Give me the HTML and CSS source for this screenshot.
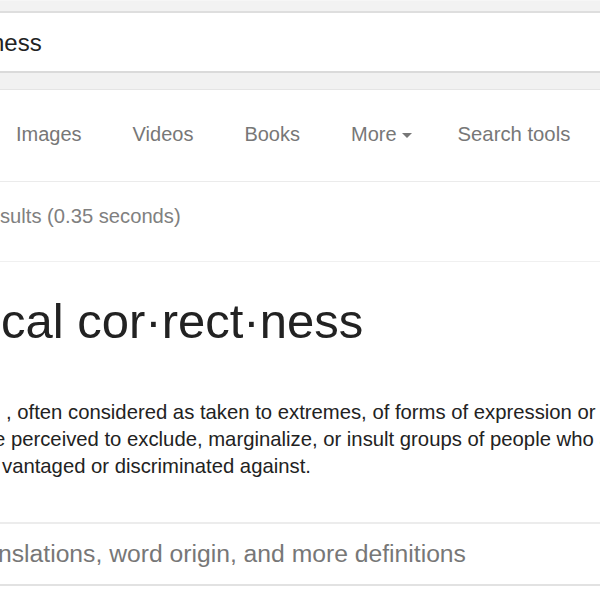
FILE: index.html
```html
<!DOCTYPE html>
<html>
<head>
<meta charset="utf-8">
<link rel="stylesheet" href="styles.css">
</head>
<body>
<div class="page">
  <div class="top-band"></div>
  <div class="search"><span class="query">ness</span></div>
  <div class="sub-band"></div>
  <nav class="tabs">
    <span class="tab t-images">Images</span>
    <span class="tab t-videos">Videos</span>
    <span class="tab t-books">Books</span>
    <span class="tab t-more">More<span class="caret"></span></span>
    <span class="tab t-tools">Search tools</span>
  </nav>
  <div class="stats">sults (0.35 seconds)</div>
  <div class="card">
    <h1 class="word">cal cor·rect·ness</h1>
    <div class="def">
      <div class="line l1">, often considered as taken to extremes, of forms of expression or action that</div>
      <div class="line l2">e perceived to exclude, marginalize, or insult groups of people who are socially</div>
      <div class="line l3">vantaged or discriminated against.</div>
    </div>
    <div class="more-defs"><span class="md-text">nslations, word origin, and more definitions</span></div>
  </div>
</div>
</body>
</html>
```

FILE: styles.css
```css
html, body {
  margin: 0;
  padding: 0;
  background: #ffffff;
}
body {
  width: 600px;
  height: 600px;
  overflow: hidden;
  font-family: "Liberation Sans", Arial, sans-serif;
}
.page {
  width: 600px;
  display: flex;
  flex-direction: column;
}
.top-band {
  height: 10px;
  background: #f2f2f2;
  border-top: 1px solid #f6f6f6;
  border-bottom: 2px solid #dedede;
}
.search {
  height: 58px;
  background: #ffffff;
  display: flex;
  align-items: center;
  overflow: hidden;
}
.query {
  font-size: 24px;
  color: #222222;
  margin-left: -9px;
  padding-top: 1px;
}
.sub-band {
  height: 16px;
  background: #f1f1f1;
  border-top: 2px solid #dadada;
  border-bottom: 1px solid #e4e4e4;
}
.tabs {
  height: 92px;
  display: flex;
  align-items: center;
  padding-bottom: 3px;
  box-sizing: border-box;
  border-bottom: 1px solid #ebebeb;
  font-size: 20px;
  color: #777777;
}
.tab {
  white-space: nowrap;
  display: flex;
  align-items: center;
}
.t-images { margin-left: 16px; }
.t-videos { margin-left: 51px; }
.t-books { margin-left: 51px; }
.t-more { margin-left: 51px; }
.t-tools { margin-left: 46px; font-size: 20.3px; }
.caret {
  display: inline-block;
  width: 0;
  height: 0;
  margin-left: 5px;
  margin-top: 2px;
  border-left: 5px solid transparent;
  border-right: 5px solid transparent;
  border-top: 5px solid #777777;
}
.stats {
  height: 80px;
  box-sizing: border-box;
  padding-top: 23px;
  font-size: 20.2px;
  color: #808080;
  border-bottom: 1px solid #f0f0f0;
  white-space: nowrap;
}
.card {
  display: flex;
  flex-direction: column;
}
.word {
  margin: 0;
  height: 137px;
  box-sizing: border-box;
  padding-top: 31px;
  padding-left: 1px;
  font-weight: normal;
  font-size: 49px;
  line-height: 56px;
  color: #222222;
  white-space: nowrap;
}
.def {
  font-size: 20.3px;
  line-height: 27px;
  color: #222222;
}
.line {
  white-space: nowrap;
  overflow: hidden;
}
.l1 { padding-left: 6px; }
.l2 { margin-left: -6px; }
.l3 { padding-left: 2px; }
.more-defs {
  margin-top: 42px;
  height: 64px;
  box-sizing: border-box;
  border-top: 2px solid #ececec;
  border-bottom: 2px solid #e2e2e2;
  display: flex;
  align-items: center;
  overflow: hidden;
}
.md-text {
  font-size: 24.7px;
  color: #777777;
  white-space: nowrap;
  margin-left: -2px;
}
```
